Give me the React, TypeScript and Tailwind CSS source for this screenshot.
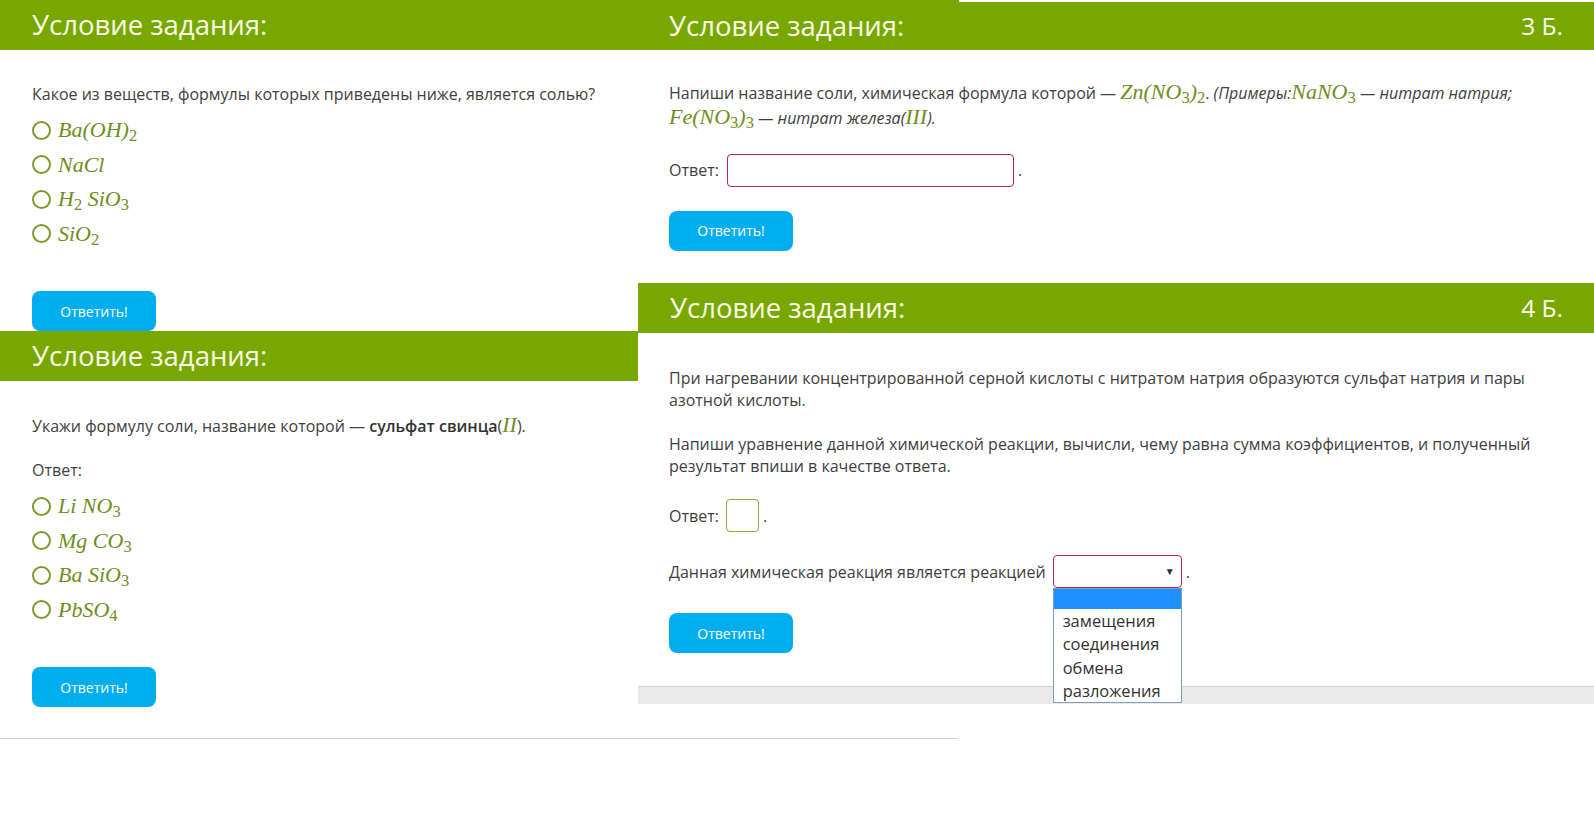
import React from "react";

// collage of four quiz task cards (yaklass style)

function Header({ points }: { points?: string }) {
  return (
    <div className="h-[50px] bg-[#78a800] flex items-center justify-between pl-[32px] pr-[31px] text-[27.5px] text-[#fbfbe8] leading-none">
      <span>Условие задания:</span>
      {points && <span className="text-[24.5px]">{points}</span>}
    </div>
  );
}

function F({ children, upright }: { children: React.ReactNode; upright?: boolean }) {
  return (
    <span
      className={
        upright
          ? "font-['Liberation_Serif',serif] not-italic text-[22px] text-[#6e8e1d] leading-none"
          : "font-['Liberation_Serif',serif] italic text-[22px] text-[#6e8e1d] leading-none"
      }
    >
      {children}
    </span>
  );
}

function Sub({ children }: { children: React.ReactNode }) {
  return <sub className="not-italic">{children}</sub>;
}

function Option({ children }: { children: React.ReactNode }) {
  return (
    <div className="h-[34.5px] flex items-center gap-[7px]">
      <span className="w-[19px] h-[19px] rounded-full border-2 border-[#7d9b2c]" />
      {children}
    </div>
  );
}

function SubmitButton({ className }: { className: string }) {
  return (
    <button
      className={
        "w-[124px] h-[40px] rounded-[8px] bg-[#00adee] text-white text-[14px] flex items-center justify-center " +
        className
      }
    >
      Ответить!
    </button>
  );
}

const options1 = [
  <F key="a">Ba(OH)<Sub>2</Sub></F>,
  <F key="b">NaCl</F>,
  <F key="c">H<Sub>2</Sub> SiO<Sub>3</Sub></F>,
  <F key="d">SiO<Sub>2</Sub></F>,
];

const options2 = [
  <F key="a">Li NO<Sub>3</Sub></F>,
  <F key="b">Mg CO<Sub>3</Sub></F>,
  <F key="c">Ba SiO<Sub>3</Sub></F>,
  <F key="d">PbSO<Sub>4</Sub></F>,
];

const reactionTypes = ["замещения", "соединения", "обмена", "разложения"];

export default function App() {
  return (
    <div className="w-[1594px] h-[819px] bg-white overflow-hidden font-['Open_Sans',sans-serif] text-[16px] text-[#404040]">
      <div className="flex items-start">
        {/* left column */}
        <div className="w-[638px] flex flex-col">
          <Header />
          <div className="h-[281px] pt-[33px] pl-[32px]">
            <p className="leading-[22px]">Какое из веществ, формулы которых приведены ниже, является солью?</p>
            <div className="mt-[8px] flex flex-col">
              {options1.map((o, i) => (
                <Option key={i}>{o}</Option>
              ))}
            </div>
            <SubmitButton className="mt-[40px]" />
          </div>

          <Header />
          <div className="h-[357px] pt-[33px] pl-[32px]">
            <p className="leading-[22px]">
              Укажи формулу соли, название которой — <b className="font-semibold text-[#333]">сульфат свинца</b>(
              <F>II</F>).
            </p>
            <p className="leading-[22px] mt-[22px]">Ответ:</p>
            <div className="mt-[8px] flex flex-col">
              {options2.map((o, i) => (
                <Option key={i}>{o}</Option>
              ))}
            </div>
            <SubmitButton className="mt-[40px]" />
          </div>
        </div>

        {/* right column */}
        <div className="w-[956px] flex flex-col">
          <div className="h-[2px] flex">
            <div className="w-[321px] bg-[#78a800]" />
          </div>
          <div className="h-[48px] bg-[#78a800] flex items-center justify-between pl-[31px] pr-[31px] text-[27.5px] text-[#fbfbe8] leading-none">
            <span>Условие задания:</span>
            <span className="text-[24.5px]">3 Б.</span>
          </div>
          <div className="h-[233px] pt-[31px] pl-[31px]">
            <p className="leading-[24.5px] whitespace-nowrap">
              Напиши название соли, химическая формула которой — <F>Zn(NO<Sub>3</Sub>)<Sub>2</Sub></F>.{" "}
              <i>
                (Примеры:<F>NaNO<Sub>3</Sub></F> — нитрат натрия;
              </i>
              <br />
              <i>
                <F>Fe(NO<Sub>3</Sub>)<Sub>3</Sub></F> — нитрат железа(<F>III</F>).
              </i>
            </p>
            <div className="mt-[23.5px] h-[33px] flex items-center">
              <span>Ответ:</span>
              <span className="ml-[8px] w-[287px] h-[33px] rounded-[4px] border border-[#b8246c] shadow-[inset_0_1px_2px_rgba(0,0,0,0.08)]" />
              <span className="ml-[4px]">.</span>
            </div>
            <SubmitButton className="mt-[24px]" />
          </div>

          <Header points="4 Б." />
          <div className="h-[353px] pt-[34px] pl-[31px]">
            <p className="leading-[22px] whitespace-nowrap">
              При нагревании концентрированной серной кислоты с нитратом натрия образуются сульфат натрия и пары
              <br />
              азотной кислоты.
            </p>
            <p className="leading-[22px] mt-[22px] whitespace-nowrap">
              Напиши уравнение данной химической реакции, вычисли, чему равна сумма коэффициентов, и полученный
              <br />
              результат впиши в качестве ответа.
            </p>
            <div className="mt-[22px] h-[33px] flex items-center">
              <span>Ответ:</span>
              <span className="ml-[7px] w-[33px] h-[33px] rounded-[4px] border border-[#8aa53a]" />
              <span className="ml-[4px]">.</span>
            </div>
            <div className="mt-[23px] h-[33px] flex items-center">
              <span>Данная химическая реакция является реакцией</span>
              <div className="relative ml-[7px] w-[129px] h-[33px]">
                <div className="w-full h-full rounded-[4px] border border-[#b8246c] flex items-center justify-end pr-[6px] text-[10px] text-[#333]">
                  ▼
                </div>
                <div className="absolute left-0 top-full w-full bg-white border border-[#7f9db9] z-10">
                  <div className="h-[20px] bg-[#1e90ff]" />
                  {reactionTypes.map((t) => (
                    <div key={t} className="h-[23.3px] leading-[23.3px] pl-[9px] text-[16.5px] text-[#333]">
                      {t}
                    </div>
                  ))}
                </div>
              </div>
              <span className="ml-[4px]">.</span>
            </div>
            <SubmitButton className="mt-[25px]" />
          </div>
          <div className="h-[17.5px] bg-[#e9e9e9] border-t border-[#d2d2d2]" />
        </div>
      </div>
      <div className="w-[958px] h-px bg-[#cfcfcf]" />
    </div>
  );
}
